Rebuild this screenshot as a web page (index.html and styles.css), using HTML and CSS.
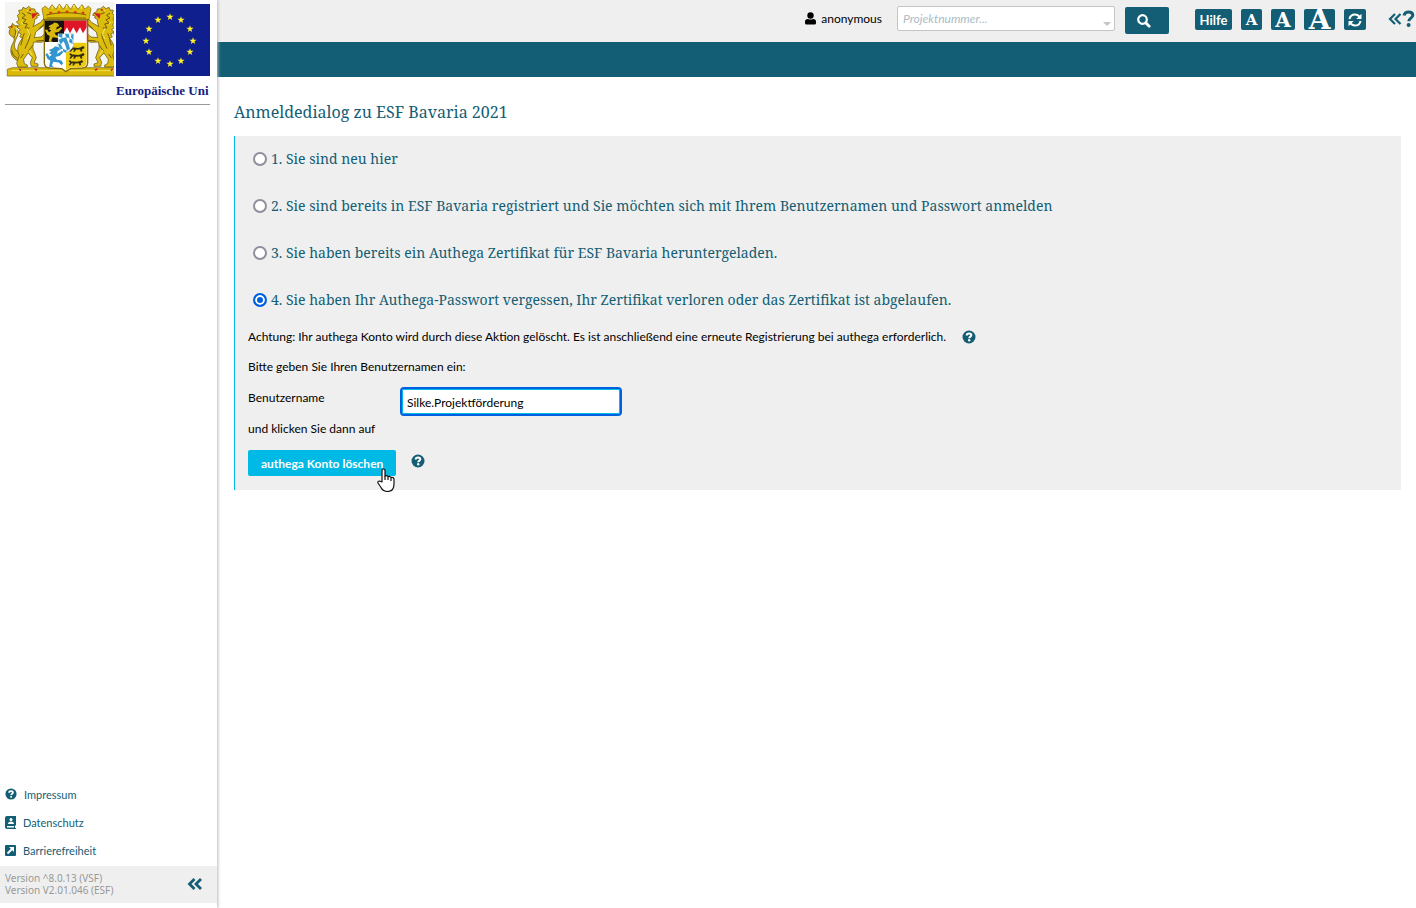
FILE: index.html
```html
<!DOCTYPE html>
<html lang="de">
<head>
    <meta charset="UTF-8">
    <meta name="viewport" content="width=device-width, initial-scale=1.0">
    <title>ESF Bavaria 2021</title>
    <link rel="stylesheet" href="styles.css">
</head>
<body>

<!-- Symbole -->
<svg class="symbols" aria-hidden="true">
    <symbol id="icon-help" viewBox="0 0 14 14">
        <circle cx="7" cy="7" r="6.5" fill="currentColor"/>
        <path d="M4.700 5.500C4.800 4.100 5.900 3.600 7.100 3.600c1.300 0 2.200.7 2.200 1.700C9.300 6.700 7.200 6.700 7.200 8.300" fill="none" stroke="#fff" stroke-width="2"/>
        <circle cx="7.200" cy="10.300" r="1.200" fill="#fff"/>
    </symbol>
    <symbol id="icon-double" viewBox="0 0 16 14">
        <path d="M7.500 2L2.500 7l5 5M14 2L9 7l5 5" fill="none" stroke="currentColor" stroke-width="2.800"/>
    </symbol>
    <symbol id="lion" viewBox="0 0 130 225">
        <g stroke="#5d4a08" stroke-width="2" stroke-linejoin="round">
            <path d="M38 178C16 166 12 144 24 124c6-10 4-16-4-20-8-5-10-14-4-22l-6-6 10-2 2-9 8 7 9 0-5 8c8 10 6 18 2 26-8 16-12 28-2 40l16 12z" fill="#d3b20b"/>
            <path d="M37 41l7-6-3-9 10-1 3-8 9 4 8-7 8 7 10 1 2 8 9 4 3 7-8 2 2 6-8 4c0 10-2 16-5 22l23-13 7-9 8 5-2 11-28 22-4 17 20-2 8-7 9 6-3 11-13 6-23-1c-3 14-4 20 2 30l6 17-7 15 12 4v7H79l-3-12 6-14-13-14-13 19 2 13 9 4v6H39l-4-11 8-24-4-9c-3-18 4-30 13-42l-8-5 5-8-10-5 7-8-10-7 8-7-10-9 8-6z" fill="#dcbc0c"/>
        </g>
        <path d="M51 34l10 7-10 8 12 5-9 10 13 3-7 12 13 0M73 25l-5 8 10 4M58 95c-7 13-6 26-11 36M76 96c-2 18-10 30-16 45M83 131l-13 18M47 169l8-12M30 84c4 8 1 17-4 25M20 146c1 11 8 19 17 24M101 82l17-15M94 118l23-2" fill="none" stroke="#715b08" stroke-width="3"/>
        <path d="M66 28l7 0M48 60l6 8M66 80l8 18-8 14M33 76l4 14-5 15M73 145l9 16" fill="none" stroke="#f8e765" stroke-width="3"/>
        <path d="M82 38l11-1-9 10zM17 77l5-4M115 53l9-4M117 107l8 5M43 202l5 5M89 202l7 4M73 24l5 2" fill="#d21b24" stroke="#d21b24" stroke-width="5"/>
    </symbol>
    <symbol id="small-lion" viewBox="0 0 50 55">
        <path d="M19 8l6-5 9 3 4 7-7 2-1 8 12-8 4 3-9 10-12 3 4 7 12 2 4 7-4 5-7-7-14-2-4 9 5 5-3 3-9-4 3-16-7-4-4-9-5 5 1-9 8-1 5 8 6-5-7-4 5-4-6-4 6-3z" fill="currentColor"/>
    </symbol>
    <symbol id="leopard" viewBox="0 0 54 20">
        <path d="M4 2l5-1 3 4 6 0 14 1 10-3 5-3 5 4-3 5-5 1 1 7-5 1-3-7-12 1-4 6-5 0 3-7-6 1-4 6-5-1 5-8-4-3z" fill="#332d12"/>
    </symbol>
</svg>

<div class="page">
    <aside class="sidebar">
        <div class="logos">
            <svg class="arms" viewBox="15 6 327 225" role="img" aria-label="Bayerisches Staatswappen">
                <rect x="15" y="6" width="327" height="225" fill="#f5f5f3"/>
                <path d="M22 208l16-5h320v25H22z" fill="#d8b80b" stroke="#766008" stroke-width="2"/>
                <path d="M34 212h308" stroke="#f5df48" stroke-width="3"/>
                <use href="#lion" x="15" y="5" width="130" height="225"/>
                <use href="#lion" x="15" y="5" width="130" height="225" transform="matrix(-1 0 0 1 396 0)"/>
                <!-- Volkskrone -->
                <path d="M132 58l-6-32 10-8 10 10 10-14 12 14 10-16 12 16 10-16 12 16 10-16 12 16 12-14 9 14 10-10 8 8-6 32z" fill="#dfbd0b" stroke="#80620b" stroke-width="2"/>
                <path d="M139 45c34-9 85-9 120 0M140 54h118" fill="none" stroke="#796006" stroke-width="3"/>
                <path d="M146 39l6-5 6 5-6 4zM171 37l6-5 6 5-6 4zM195 36l6-5 6 5-6 4zM220 37l6-5 6 5-6 4zM243 39l6-5 6 5-6 4z" fill="#d33a18"/>
                <path d="M157 18v8M178 15v10M200 15v10M222 15v10M244 18v8" stroke="#f9e854" stroke-width="4"/>
                <!-- Schild -->
                <path d="M133 60h130v128q0 14-16 16l-36 2-13 9-13-9-36-2q-16-2-16-16z" fill="#fff" stroke="#866d08" stroke-width="4"/>
                <path d="M135 62h57v64h-57z" fill="#17120e"/>
                <path d="M192 62h68v64h-68z" fill="#df1528"/>
                <path d="M192 126v-29l9-15 9 18 10-18 10 18 10-18 9 18 11-18v44z" fill="#fff"/>
                <path d="M198 128h62v58q0 13-14 15l-35 2-13 8z" fill="#edca0b"/>
                <use href="#small-lion" class="lion-gold" x="136" y="64" width="55" height="61"/>
                <use href="#small-lion" class="lion-blue" x="137" y="133" width="58" height="68"/>
                <use href="#leopard" x="202" y="138" width="56" height="19"/>
                <use href="#leopard" x="202" y="159" width="56" height="19"/>
                <use href="#leopard" x="202" y="180" width="50" height="18"/>
                <path d="M174 101h46v35q-3 15-23 22-20-7-23-22z" fill="#fff" stroke="#65a9ca"/>
                <path d="M176 102l11 0 0 12-11-4zM195 102h11l3 13-11-3zM214 103h6v18l-7-9zM187 114l11-2 5 12-12 0zM209 115l8 4 1 13-11-6zM175 119l12-5 4 10-9 9zM191 124l12 0 4 11-11 1zM174 131l8 2 7 13-9 2zM196 136l11-1 3 12-9 5zM189 146l12 6-4 6-8-4z" fill="#3698cd"/>
            </svg>
            <div class="eu">
                <svg class="flag" viewBox="0 0 94 72" role="img" aria-label="Europaflagge">
                    <defs>
                        <path id="star" d="M0-3.800L.9-1.200H3.600L1.400.500 2.200 3.100 0 1.500-2.200 3.100-1.400.500-3.600-1.200H-.9z" fill="#fff126"/>
                    </defs>
                    <rect width="94" height="72" fill="#0f1f8e"/>
                    <use href="#star" x="54" y="13"/>
                    <use href="#star" x="65" y="16"/>
                    <use href="#star" x="74" y="25"/>
                    <use href="#star" x="77" y="37"/>
                    <use href="#star" x="74" y="48"/>
                    <use href="#star" x="65" y="57"/>
                    <use href="#star" x="54" y="60"/>
                    <use href="#star" x="42" y="57"/>
                    <use href="#star" x="33" y="48"/>
                    <use href="#star" x="30" y="37"/>
                    <use href="#star" x="33" y="25"/>
                    <use href="#star" x="42" y="16"/>
                </svg>
                <span class="eu-text">Europäische Uni</span>
            </div>
        </div>

        <nav class="links">
            <a href="#impressum">
                <svg class="icon" aria-hidden="true"><use href="#icon-help"/></svg>
                Impressum
            </a>
            <a href="#datenschutz">
                <svg class="icon-small" viewBox="0 0 11 13" aria-hidden="true">
                    <path d="M2 0h9v9.500h-1V12h1v1H2q-2 0-2-2V2q0-2 2-2z" fill="currentColor"/>
                    <circle cx="6" cy="3.500" r="1.500" fill="#fff"/>
                    <path d="M3 8q0-2.500 3-2.500T9 8zM2 10h7v1.500H2z" fill="#fff"/>
                </svg>
                Datenschutz
            </a>
            <a href="#barrierefreiheit">
                <svg class="icon-small" viewBox="0 0 11 13" aria-hidden="true">
                    <rect y="1" width="11" height="11" rx="1" fill="currentColor"/>
                    <path d="M2.500 9.500L7 5" stroke="#fff" stroke-width="1.800"/>
                    <path d="M4 3h5v5z" fill="#fff"/>
                </svg>
                Barrierefreiheit
            </a>
        </nav>

        <footer class="version">
            <div>
                <p>Version ^8.0.13 (VSF)</p>
                <p>Version V2.01.046 (ESF)</p>
            </div>
            <button type="button" class="plain" aria-label="Menü einklappen">
                <svg class="icon-double" aria-hidden="true"><use href="#icon-double"/></svg>
            </button>
        </footer>
    </aside>

    <div class="main">
        <header class="topbar">
            <span class="user">
                <svg class="icon-small" viewBox="0 0 11 13" aria-hidden="true">
                    <circle cx="5.500" cy="3.500" r="3.200" fill="currentColor"/>
                    <path d="M0 11V9.500Q0 7 3 7q2.500 1 5 0 3 0 3 2.500V11q0 1.500-1.500 1.500h-8Q0 12.500 0 11z" fill="currentColor"/>
                </svg>
                anonymous
            </span>
            <form class="search">
                <div class="combo">
                    <input type="text" placeholder="Projektnummer..." aria-label="Projektnummer">
                </div>
                <button type="button" class="search-button" aria-label="Suchen">
                    <svg viewBox="0 0 14 14" aria-hidden="true">
                        <circle cx="5.500" cy="5.500" r="4.300" fill="none" stroke="#fff" stroke-width="2.200"/>
                        <path d="M8.700 8.700l3.500 3.500" stroke="#fff" stroke-width="2.800" stroke-linecap="round"/>
                    </svg>
                </button>
            </form>
            <div class="tools">
                <button type="button" class="tool help">Hilfe</button>
                <button type="button" class="tool font-small" aria-label="Kleine Schrift">A</button>
                <button type="button" class="tool font-medium" aria-label="Mittlere Schrift">A</button>
                <button type="button" class="tool font-large" aria-label="Große Schrift">A</button>
                <button type="button" class="tool reload" aria-label="Aktualisieren">
                    <svg viewBox="0 0 14 14" aria-hidden="true">
                        <path d="M1.500 6.200C2 3.200 4.300 1.500 7 1.500c1.800 0 3.200.7 4.400 2M12.500 7.800C12 10.800 9.700 12.500 7 12.500c-1.800 0-3.200-.7-4.400-2" fill="none" stroke="#fff" stroke-width="2"/>
                        <path d="M13.500.8v5.200H8.300zM.5 13.200V8h5.200z" fill="#fff"/>
                    </svg>
                </button>
            </div>
            <button type="button" class="plain help-toggle" aria-label="Hilfebereich öffnen">
                <svg viewBox="0 0 27 18" aria-hidden="true">
                    <path d="M7 4L2 9l5 5M12.500 4l-5 5 5 5" fill="none" stroke="currentColor" stroke-width="2.200"/>
                    <path d="M16 5.500C16.500 3 18.300 2 20.500 2c2.500 0 4.300 1.300 4.300 3.300 0 3-4 2.700-4 6" fill="none" stroke="currentColor" stroke-width="3"/>
                    <circle cx="20.600" cy="15" r="2" fill="currentColor"/>
                </svg>
            </button>
        </header>
        <div class="band"></div>

        <main class="content">
            <h1>Anmeldedialog zu ESF Bavaria 2021</h1>

            <form class="panel">
                <label class="option">
                    <input type="radio" name="login">
                    1. Sie sind neu hier
                </label>
                <label class="option">
                    <input type="radio" name="login">
                    2. Sie sind bereits in ESF Bavaria registriert und Sie möchten sich mit Ihrem Benutzernamen und Passwort anmelden
                </label>
                <label class="option">
                    <input type="radio" name="login">
                    3. Sie haben bereits ein Authega Zertifikat für ESF Bavaria heruntergeladen.
                </label>
                <label class="option">
                    <input type="radio" name="login" checked>
                    4. Sie haben Ihr Authega-Passwort vergessen, Ihr Zertifikat verloren oder das Zertifikat ist abgelaufen.
                </label>

                <div class="details">
                    <p class="line">
                        Achtung: Ihr authega Konto wird durch diese Aktion gelöscht. Es ist anschließend eine erneute Registrierung bei authega erforderlich.
                        <svg class="icon" role="img" aria-label="Hilfe"><use href="#icon-help"/></svg>
                    </p>
                    <p class="line">Bitte geben Sie Ihren Benutzernamen ein:</p>
                    <div class="field">
                        <label for="username">Benutzername</label>
                        <input type="text" id="username" value="Silke.Projektförderung">
                    </div>
                    <p class="line">und klicken Sie dann auf</p>
                    <div class="actions">
                        <button type="button" class="delete">
                            authega Konto löschen
                            <svg class="cursor" viewBox="0 0 18 24" aria-hidden="true">
                                <path d="M5 14V2.500q0-1.500 1.500-1.500T8 2.500V8q2-1 3 .5 2-.7 3 1 2.500-.5 3 1.500v5q0 7-6 7.500-5 0-7-4L1 15q-.5-2 1.500-2z" fill="#fff" stroke="#111" stroke-width="1.200" stroke-linejoin="round"/>
                                <path d="M8 8v4M11 9v3M14 10v3" stroke="#111" stroke-width="1.200"/>
                            </svg>
                        </button>
                        <svg class="icon" role="img" aria-label="Hilfe"><use href="#icon-help"/></svg>
                    </div>
                </div>
            </form>
        </main>
    </div>
</div>

</body>
</html>
```

FILE: styles.css
```css
* {
    box-sizing: border-box;
}
body {
    margin: 0;
    font-family: Lato, "Noto Sans", sans-serif;
    font-size: 12px;
    color: #000;
    background-color: #fff;
}
h1, p {
    margin: 0;
    font-weight: normal;
}
button, input {
    font-family: inherit;
    font-size: inherit;
}
button {
    padding: 0;
    border: none;
    border-radius: 2px;
    background-color: #135e74;
    color: white;
    cursor: pointer;
}
svg {
    display: block;
    flex: none;
}
.symbols {
    position: absolute;
    width: 0;
    height: 0;
}
.icon {
    width: 14px;
    height: 14px;
    color: #135e74;
}
.icon-small {
    width: 11px;
    height: 13px;
}
.icon-double {
    width: 16px;
    height: 14px;
}
.plain {
    background: none;
    color: #135e74;
}
.page {
    display: flex;
    min-height: 100vh;
}

/* Seitenleiste */
.sidebar {
    flex: none;
    display: flex;
    flex-direction: column;
    width: 217px;
    padding-bottom: 5px;
    box-shadow: 1px 0 3px #bbb;
    z-index: 1;
}
.logos {
    display: flex;
    gap: 2px;
    margin: 0 7px 0 5px;
    padding-top: 2px;
    height: 105px;
    border-bottom: 1px solid #999;
}
.arms {
    width: 109px;
    height: 75px;
}
.lion-gold {
    color: #d9b80d;
}
.lion-blue {
    color: #2f94cf;
}
.eu {
    padding-top: 2px;
}
.flag {
    width: 94px;
    height: 72px;
}
.eu-text {
    display: block;
    margin-top: 5px;
    font: bold 13px/20px "Liberation Serif", serif;
    color: #14207f;
    white-space: nowrap;
}
.links {
    display: flex;
    flex-direction: column;
    margin-top: auto;
    padding: 0 5px 2px;
    font-size: 11px;
}
.links a {
    display: flex;
    align-items: center;
    gap: 7px;
    height: 28px;
    color: #135e74;
    text-decoration: none;
}
.links .icon {
    width: 12px;
    height: 12px;
}
.version {
    display: flex;
    align-items: center;
    justify-content: space-between;
    height: 37px;
    padding: 0 14px 2px 5px;
    background-color: #efefef;
    color: #999;
    font-family: "Noto Sans", sans-serif;
    font-size: 10px;
    line-height: 12px;
}

/* Kopfzeile */
.main {
    flex: 1;
    min-width: 0;
}
.topbar {
    display: flex;
    justify-content: flex-end;
    height: 42px;
    padding: 6px 1px 0 0;
    background-color: #efefef;
}
.user {
    display: flex;
    align-items: center;
    gap: 5px;
    height: 25px;
    margin-right: 15px;
}
.search {
    display: flex;
    gap: 10px;
    margin-right: 26px;
}
.combo {
    position: relative;
    height: 25px;
}
.combo input {
    width: 218px;
    height: 25px;
    padding: 0 5px;
    border: 1px solid #c5c5c5;
    border-radius: 2px;
    background-color: #fff;
}
.combo input::placeholder {
    color: #a9bcc6;
    font-style: italic;
}
.combo::after {
    content: "";
    position: absolute;
    right: 4px;
    bottom: 5px;
    border: 4px solid transparent;
    border-top-color: #c5c5c5;
    border-bottom: none;
}
.search-button {
    display: flex;
    align-items: center;
    justify-content: center;
    width: 44px;
    height: 27px;
    margin-top: 1px;
    padding-right: 6px;
}
.search-button svg,
.reload svg {
    width: 14px;
    height: 14px;
}
.tools {
    display: flex;
    gap: 9px;
    margin: 3px 22px 0 0;
}
.tool {
    display: flex;
    align-items: center;
    justify-content: center;
    height: 21px;
    font-weight: bold;
}
.help {
    width: 37px;
    font-size: 13px;
}
.reload {
    width: 22px;
}
.font-small,
.font-medium,
.font-large {
    font-family: "DejaVu Serif", serif;
}
.font-small {
    width: 21px;
    font-size: 15px;
}
.font-medium {
    width: 24px;
    font-size: 20px;
}
.font-large {
    width: 31px;
    font-size: 28px;
}
.help-toggle {
    width: 27px;
    height: 26px;
}
.band {
    height: 35px;
    background-color: #135e74;
}

/* Anmeldedialog */
.content {
    padding: 24px 15px 0 17px;
}
h1 {
    margin-bottom: 13px;
    font: 16px/22px "Noto Serif", "Liberation Serif", serif;
    color: #135e74;
}
.panel {
    padding: 12px 13px 14px;
    border-left: 1px solid #00b9e4;
    background-color: #efefef;
}
.option {
    display: flex;
    align-items: center;
    gap: 4px;
    margin: 0 0 25px 5px;
    font: 14px/22px "Noto Serif", "Liberation Serif", serif;
    color: #135e74;
}
.option input {
    appearance: none;
    flex: none;
    width: 14px;
    height: 14px;
    margin: 0;
    border: 2px solid #8f8f9d;
    border-radius: 50%;
    background-color: #fff;
}
.option input:checked {
    border-color: #0061e0;
    background-color: #0061e0;
    box-shadow: inset 0 0 0 2px #fff;
}
.details {
    display: flex;
    flex-direction: column;
    gap: 10px;
    margin-top: -9px;
}
.line {
    display: flex;
    align-items: center;
    gap: 16px;
    line-height: 20px;
}
.field {
    display: flex;
    gap: 12px;
    height: 22px;
}
.field label {
    width: 140px;
    line-height: 22px;
}
.field input {
    width: 222px;
    height: 29px;
    padding: 2px 5px 0;
    border: 2px solid #0061e0;
    border-radius: 4px;
    box-shadow: inset 0 0 0 1px #00b9e4;
    background-color: #fff;
    outline: none;
}
.actions {
    display: flex;
    gap: 15px;
    padding-top: 1px;
}
.actions .icon {
    margin-top: 4px;
}
.delete {
    position: relative;
    height: 26px;
    padding: 0 13px;
    background-color: #00b9e4;
    font-weight: bold;
}
.cursor {
    position: absolute;
    right: 1px;
    top: 18px;
    width: 18px;
    height: 24px;
}
```
